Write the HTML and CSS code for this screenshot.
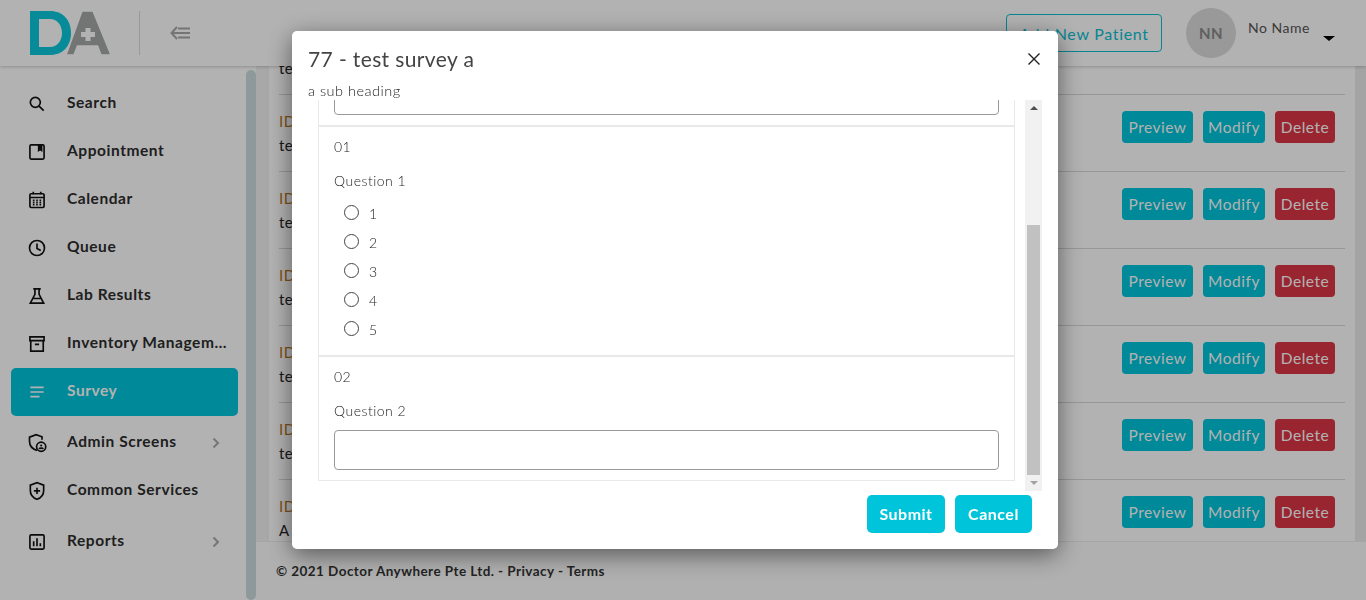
FILE: index.html
```html
<!DOCTYPE html>
<html lang="en">
<head>
  <meta charset="UTF-8">
  <meta name="viewport" content="width=device-width, initial-scale=1.0">
  <title>Survey</title>
  <link rel="stylesheet" href="styles.css">
</head>
<body>

  <header class="topbar">
    <div class="brand">
      <svg class="logo" viewBox="0 0 82 44" width="82" height="44">
        <path class="logo-d" fill-rule="evenodd" d="M0 0H20C33 0 41 9 41 22C41 35 33 44 20 44H0ZM9 8V36H20C27 36 32 30 32 22C32 14 27 8 20 8Z"/>
        <path class="logo-a" d="M36 44L52 0H63L81 44H71L67.500 35H47.500L44 44Z"/>
        <path class="logo-plus" d="M55.500 17H60.500V21H65V26H60.500V30H55.500V26H51V21H55.500Z"/>
      </svg>
      <span class="brand-divider"></span>
      <svg class="collapse-icon" viewBox="0 0 20 14" width="20" height="14">
        <path d="M7 1L1.500 7L7 13M2 7H20M8 2.500H20M8 11.500H20"/>
      </svg>
    </div>
    <div class="user-area">
      <button class="add-patient">Add New Patient</button>
      <div class="avatar">NN</div>
      <div class="user-name">No Name</div>
      <span class="user-caret"></span>
    </div>
  </header>

  <div class="page">
    <aside class="sidebar">
      <nav class="side-nav">
        <a class="nav-item">
          <svg class="nav-icon" viewBox="0 0 24 24"><circle cx="10" cy="10" r="6"/><path d="M14.500 14.500L20 20"/></svg>
          <span class="nav-label">Search</span>
        </a>
        <a class="nav-item">
          <svg class="nav-icon" viewBox="0 0 24 24"><rect x="3.500" y="3.500" width="17" height="17" rx="1.500"/><path class="solid" d="M13 3.500H18.500V12L15.750 10.200L13 12Z"/></svg>
          <span class="nav-label">Appointment</span>
        </a>
        <a class="nav-item">
          <svg class="nav-icon" viewBox="0 0 24 24"><rect x="3.500" y="4.500" width="17" height="16.500" rx="1.500"/><path d="M3.500 9H20.500M7.500 2V5M16.500 2V5M7 12.500H9M11 12.500H13M15 12.500H17M7 15H9M11 15H13M15 15H17M7 17.500H9M11 17.500H13M15 17.500H17"/></svg>
          <span class="nav-label">Calendar</span>
        </a>
        <a class="nav-item">
          <svg class="nav-icon" viewBox="0 0 24 24"><circle cx="12" cy="12" r="9"/><path d="M12 6.500V12.500L16.500 15"/></svg>
          <span class="nav-label">Queue</span>
        </a>
        <a class="nav-item">
          <svg class="nav-icon" viewBox="0 0 24 24"><path d="M7.500 3.500H16.500M9.500 3.500V10L4 20.500H20L14.500 10V3.500M7 15H17"/></svg>
          <span class="nav-label">Lab Results</span>
        </a>
        <a class="nav-item">
          <svg class="nav-icon" viewBox="0 0 24 24"><path d="M3.500 3.500H20.500V8H3.500ZM4.500 8V20.500H19.500V8M9.500 12.500H14.500"/></svg>
          <span class="nav-label">Inventory Management</span>
        </a>
        <a class="nav-item active">
          <svg class="nav-icon" viewBox="0 0 24 24"><path d="M4 6.500H20M4 12H20M4 17.500H15"/></svg>
          <span class="nav-label">Survey</span>
        </a>
        <a class="nav-item tall">
          <svg class="nav-icon" viewBox="0 0 24 24"><path d="M12 21C7 19.500 3 15.500 3 10V5L11 2L18 4.500V8"/><circle cx="17" cy="16.500" r="5.500"/><circle class="solid" cx="17" cy="15" r="1.300"/><path d="M14.500 19C15 17.800 19 17.800 19.500 19"/></svg>
          <span class="nav-label">Admin Screens</span>
          <svg class="nav-chevron" viewBox="0 0 8 12"><path d="M1.500 1.500L6 6L1.500 10.500"/></svg>
        </a>
        <a class="nav-item">
          <svg class="nav-icon" viewBox="0 0 24 24"><path d="M12 22C7.500 20.500 4 16.500 4 11.500V5L12 2L20 5V11.500C20 16.500 16.500 20.500 12 22ZM12 8V15.500M8.250 11.750H15.750"/></svg>
          <span class="nav-label">Common Services</span>
        </a>
        <a class="nav-item tall">
          <svg class="nav-icon" viewBox="0 0 24 24"><rect x="3.500" y="3.500" width="17" height="17" rx="1.500"/><path d="M8 17V11M12 17V7.500M16 17V13.500"/></svg>
          <span class="nav-label">Reports</span>
          <svg class="nav-chevron" viewBox="0 0 8 12"><path d="M1.500 1.500L6 6L1.500 10.500"/></svg>
        </a>
      </nav>
      <div class="side-thumb"></div>
    </aside>

    <main class="main">
      <div class="content">
        <div class="survey-list">
          <div class="survey-row">
            <div class="survey-info"><div class="survey-id">ID: 78</div><div>test survey b</div></div>
            <div class="survey-actions"><button class="btn-preview">Preview</button><button class="btn-modify">Modify</button><button class="btn-delete">Delete</button></div>
          </div>
          <div class="survey-row">
            <div class="survey-info"><div class="survey-id">ID: 77</div><div>test survey a</div></div>
            <div class="survey-actions"><button class="btn-preview">Preview</button><button class="btn-modify">Modify</button><button class="btn-delete">Delete</button></div>
          </div>
          <div class="survey-row">
            <div class="survey-info"><div class="survey-id">ID: 76</div><div>test survey</div></div>
            <div class="survey-actions"><button class="btn-preview">Preview</button><button class="btn-modify">Modify</button><button class="btn-delete">Delete</button></div>
          </div>
          <div class="survey-row">
            <div class="survey-info"><div class="survey-id">ID: 75</div><div>test survey</div></div>
            <div class="survey-actions"><button class="btn-preview">Preview</button><button class="btn-modify">Modify</button><button class="btn-delete">Delete</button></div>
          </div>
          <div class="survey-row">
            <div class="survey-info"><div class="survey-id">ID: 74</div><div>test survey</div></div>
            <div class="survey-actions"><button class="btn-preview">Preview</button><button class="btn-modify">Modify</button><button class="btn-delete">Delete</button></div>
          </div>
          <div class="survey-row">
            <div class="survey-info"><div class="survey-id">ID: 73</div><div>test survey</div></div>
            <div class="survey-actions"><button class="btn-preview">Preview</button><button class="btn-modify">Modify</button><button class="btn-delete">Delete</button></div>
          </div>
          <div class="survey-row">
            <div class="survey-info"><div class="survey-id">ID: 72</div><div>A survey</div></div>
            <div class="survey-actions"><button class="btn-preview">Preview</button><button class="btn-modify">Modify</button><button class="btn-delete">Delete</button></div>
          </div>
        </div>
      </div>
      <footer class="page-footer">&copy; 2021 Doctor Anywhere Pte Ltd. - Privacy - Terms</footer>
    </main>
  </div>

  <div class="overlay"></div>

  <div class="modal">
    <div class="modal-head">
      <h2 class="modal-title">77 - test survey a</h2>
      <svg class="modal-close" viewBox="0 0 12 12" width="12" height="12"><path d="M.5.500L11.500 11.500M11.500.500L.5 11.500"/></svg>
    </div>
    <p class="modal-sub">a sub heading</p>
    <div class="modal-body">
      <div class="question-panel">
        <div class="question cut-off">
          <input class="text-answer" type="text">
        </div>
        <div class="question">
          <div class="q-number">01</div>
          <div class="q-text">Question 1</div>
          <label class="q-option"><input type="radio" name="q1"><span>1</span></label>
          <label class="q-option"><input type="radio" name="q1"><span>2</span></label>
          <label class="q-option"><input type="radio" name="q1"><span>3</span></label>
          <label class="q-option"><input type="radio" name="q1"><span>4</span></label>
          <label class="q-option"><input type="radio" name="q1"><span>5</span></label>
        </div>
        <div class="question">
          <div class="q-number">02</div>
          <div class="q-text">Question 2</div>
          <input class="text-answer" type="text">
        </div>
      </div>
      <div class="fake-scroll">
        <span class="arrow-up"></span>
        <div class="scroll-track"><div class="scroll-thumb"></div></div>
        <span class="arrow-down"></span>
      </div>
    </div>
    <div class="modal-foot">
      <button class="btn-modal btn-submit">Submit</button>
      <button class="btn-modal btn-cancel">Cancel</button>
    </div>
  </div>

</body>
</html>
```

FILE: styles.css
```css
* {
  box-sizing: border-box;
}

body {
  margin: 0;
  height: 100vh;
  overflow: hidden;
  font-family: 'Lato', 'Open Sans', sans-serif;
  letter-spacing: 0.5px;
  color: #242424;
  background: #fff;
}

button {
  font-family: inherit;
  letter-spacing: inherit;
  cursor: pointer;
}

/* top bar */
.topbar {
  position: relative;
  z-index: 2;
  height: 66px;
  display: flex;
  justify-content: space-between;
  align-items: center;
  padding: 0 31px 0 30px;
  background: #fff;
  box-shadow: 0 1px 3px rgba(0, 0, 0, 0.2);
}

.brand {
  display: flex;
  align-items: center;
}

.logo-d {
  fill: #0cc8dc;
}

.logo-a {
  fill: #a5a8a7;
  stroke: #fff;
  stroke-width: 1.500;
}

.logo-plus {
  fill: #fff;
}

.brand-divider {
  width: 1px;
  height: 44px;
  margin: 0 30px 0 27px;
  background: #dcdcdc;
}

.collapse-icon {
  fill: none;
  stroke: #a8a8a8;
  stroke-width: 2;
}

.user-area {
  display: flex;
  align-items: center;
}

.add-patient {
  width: 156px;
  height: 38px;
  margin-right: 24px;
  background: #fff;
  border: 1px solid #0cc0d2;
  border-radius: 4px;
  color: #0cc0d2;
  font-size: 16px;
  letter-spacing: 0.7px;
}

.avatar {
  width: 50px;
  height: 50px;
  margin-right: 12px;
  border-radius: 50%;
  background: #dbdbdb;
  color: #8a8a8a;
  font-size: 15px;
  font-weight: 700;
  line-height: 50px;
  text-align: center;
}

.user-name {
  width: 75px;
  margin-bottom: 12px;
  color: #555;
  font-size: 14px;
}

.user-caret {
  width: 0;
  height: 0;
  margin-top: 10px;
  border-left: 6px solid transparent;
  border-right: 6px solid transparent;
  border-top: 5px solid #000;
}

/* page below the bar */
.page {
  display: flex;
  height: calc(100vh - 66px);
}

.sidebar {
  flex: 0 0 256px;
  display: flex;
}

.side-nav {
  width: 246px;
  padding: 14px 8px 0 11px;
}

.side-thumb {
  width: 10px;
  margin-top: 4px;
  border-radius: 5px;
  background: #ccdcdf;
}

.nav-item {
  display: flex;
  align-items: center;
  height: 48px;
  padding: 0 4px 0 16px;
  border-radius: 5px;
  font-size: 15.500px;
  font-weight: 700;
  letter-spacing: 0.55px;
  color: #2d2d2d;
}

.nav-item.tall {
  height: 51px;
  padding-top: 3px;
}

.nav-item.active {
  background: #00c4da;
  color: #fff;
}

.nav-icon {
  flex: none;
  width: 20px;
  height: 20px;
  margin-right: 20px;
  fill: none;
  stroke: #111;
  stroke-width: 2;
}

.nav-item.active .nav-icon {
  stroke: #fff;
}

.nav-icon .solid {
  fill: #111;
  stroke: none;
}

.nav-label {
  flex: 1;
  min-width: 0;
  padding-bottom: 5px;
  overflow: hidden;
  white-space: nowrap;
  text-overflow: ellipsis;
}

.nav-chevron {
  flex: none;
  width: 8px;
  height: 12px;
  margin: 0 14px 0 4px;
  fill: none;
  stroke: #aaa;
  stroke-width: 2;
}

/* main column */
.main {
  flex: 1;
  min-width: 0;
  display: flex;
  flex-direction: column;
}

.content {
  flex: 1;
  min-height: 0;
  overflow: hidden;
  background: #fff;
  border-left: 13px solid #f1f1f1;
  border-right: 11px solid #ebebeb;
  padding: 0 10px;
}

.survey-list {
  margin-top: -48px;
}

.survey-row {
  display: flex;
  justify-content: space-between;
  height: 77px;
  padding: 14px 10px 0 0;
  border-bottom: 1px solid #d8d8d8;
  font-size: 15px;
  line-height: 24px;
}

.survey-id {
  color: #b87420;
}

.survey-actions {
  display: flex;
  gap: 10px;
  margin-top: 2px;
}

.survey-actions button {
  height: 32px;
  padding: 0;
  border: none;
  border-radius: 4px;
  color: #fff;
  font-size: 15.500px;
}

.btn-preview {
  width: 71px;
  background: #00c4da;
}

.btn-modify {
  width: 62px;
  background: #00c4da;
}

.btn-delete {
  width: 60px;
  background: #dc3545;
}

.page-footer {
  flex: 0 0 59px;
  padding: 21px 0 0 20px;
  background: #fdfdfd;
  border-top: 1px solid #ececec;
  font-size: 13.500px;
  font-weight: 700;
  letter-spacing: 0.44px;
  color: #333;
}

/* dialog */
.overlay {
  position: fixed;
  inset: 0;
  z-index: 5;
  background: rgba(0, 0, 0, 0.3);
}

.modal {
  position: fixed;
  top: 31px;
  left: 292px;
  z-index: 6;
  width: 766px;
  height: 518px;
  padding: 0 16px;
  background: #fff;
  border-radius: 5px;
  box-shadow: 0 6px 24px rgba(0, 0, 0, 0.5);
  color: #222;
}

.modal-head {
  display: flex;
  justify-content: space-between;
  align-items: center;
  height: 55px;
  padding-right: 2px;
}

.modal-title {
  margin: 0;
  font-size: 21px;
  font-weight: 400;
  letter-spacing: 0.38px;
  color: #444;
}

.modal-close {
  fill: none;
  stroke: #222;
  stroke-width: 1.400;
}

.modal-sub {
  margin: -4px 0 0;
  height: 18px;
  font-size: 14.500px;
  font-weight: 300;
  line-height: 17px;
}

.modal-body {
  display: flex;
  justify-content: space-between;
  height: 391px;
  padding-left: 10px;
}

.question-panel {
  width: 697px;
  height: 381px;
  overflow: hidden;
  border: 1px solid #e9e9e9;
  border-top: none;
}

.question {
  padding: 10px 15px 0;
  border-bottom: 2px solid #e9e9e9;
  font-size: 14px;
  font-weight: 300;
}

.question:last-child {
  border-bottom: none;
}

.question.cut-off {
  display: flow-root;
  height: 27px;
  padding-top: 0;
}

.question.cut-off .text-answer {
  margin-top: -25px;
}

.q-number {
  height: 20px;
  line-height: 20px;
}

.q-text {
  height: 20px;
  margin-top: 14px;
  line-height: 20px;
}

.q-option {
  display: flex;
  align-items: center;
  height: 29px;
  padding-left: 10px;
}

.q-text + .q-option {
  margin-top: 8px;
}

.q-option:last-child {
  margin-bottom: 11px;
}

.q-option input {
  appearance: none;
  flex: none;
  width: 15px;
  height: 15px;
  margin: 0 10px 2px 0;
  border: 1px solid #444;
  border-radius: 50%;
}

.text-answer {
  display: block;
  width: 100%;
  height: 40px;
  margin-top: 9px;
  border: 1px solid #999;
  border-radius: 4px;
}

.fake-scroll {
  flex: 0 0 17px;
  display: flex;
  flex-direction: column;
  align-items: center;
  background: #f1f1f1;
}

.arrow-up,
.arrow-down {
  flex: 0 0 4px;
  width: 0;
  height: 0;
  border-left: 4px solid transparent;
  border-right: 4px solid transparent;
}

.arrow-up {
  border-bottom: 4px solid #505050;
  margin-top: 6px;
  margin-bottom: 7px;
}

.arrow-down {
  border-top: 4px solid #a3a3a3;
  margin-top: 6px;
  margin-bottom: 6px;
}

.scroll-track {
  flex: 1;
  width: 100%;
  padding: 108px 2px 0;
}

.scroll-thumb {
  height: 250px;
  background: #c1c1c1;
}

.modal-foot {
  display: flex;
  justify-content: flex-end;
  gap: 10px;
  margin-top: 4px;
  padding-right: 10px;
}

.btn-modal {
  height: 38px;
  padding: 0 0 2px;
  border: none;
  border-radius: 5px;
  background: #00c4da;
  color: #fff;
  font-size: 16px;
  font-weight: 700;
}

.btn-submit {
  width: 78px;
}

.btn-cancel {
  width: 77px;
}
```
